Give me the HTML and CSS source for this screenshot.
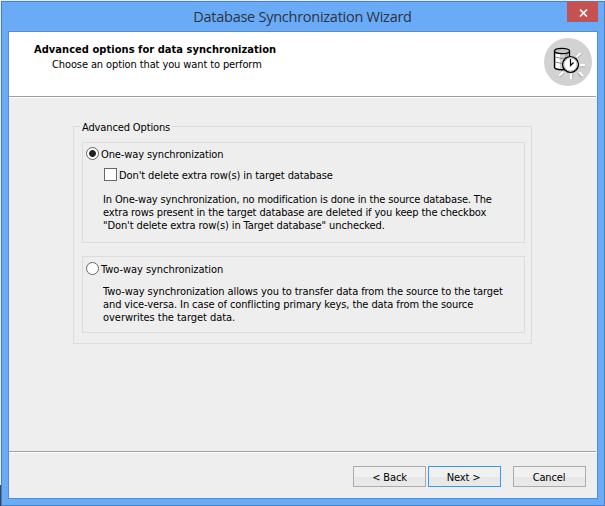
FILE: index.html
```html
<!DOCTYPE html>
<html lang="en">
<head>
<meta charset="utf-8">
<title>Database Synchronization Wizard</title>
<link rel="stylesheet" href="styles.css">
</head>
<body>
<div class="window">
  <div class="titlebar">
    <h1 class="title">Database Synchronization Wizard</h1>
    <button class="close" aria-label="Close"><svg width="9" height="8" viewBox="0 0 9 8"><path d="M1 .5 8 7.5M8 .5 1 7.5" stroke="#fff" stroke-width="1.7"/></svg></button>
  </div>
  <div class="client">
    <header class="header">
      <div class="heading">
        <h2><span class="t-heading">Advanced options for data synchronization</span></h2>
        <p><span class="t-sub">Choose an option that you want to perform</span></p>
      </div>
      <svg class="emblem" width="48" height="48" viewBox="0 0 48 48">
        <circle cx="24" cy="24" r="24" fill="#d2d2d2"/>
        <g stroke="#aaa" stroke-width="3.4"><path d="M32.5 19.5l4-4M36 27.5h5M34.5 34.5l4 4M27.5 36v5M19 34.5l-4 4"/></g>
        <g stroke="#fff" stroke-width="2.4"><path d="M32.5 19l4-4M36 27h5M35 34l4 4M27 36v5M19 34l-4 4"/></g>
        <path d="M10.5 13v16.5c1 3 14 3 15 0V13z" fill="#d0d0d0" stroke="#000" stroke-width="1.3"/>
        <path d="M12 15h4v15h-4z" fill="#fff"/>
        <path d="M21 15h4v15h-4z" fill="#aaa"/>
        <path d="M11 19q7 3 14 0M11 24q7 3 14 0" fill="none" stroke="#888"/>
        <ellipse cx="18" cy="13" rx="7.5" ry="2.7" fill="#c6c6c6" stroke="#000" stroke-width="1.2"/>
        <circle cx="26.5" cy="26.5" r="7.9" fill="#fff" stroke="#000" stroke-width="1.4"/>
        <circle cx="26.5" cy="26.5" r="6.5" fill="none" stroke="#bbb"/>
        <path d="M26.5 21V27.5l3-3" fill="none" stroke="#000" stroke-width="1.2"/>
      </svg>
    </header>
    <main class="content">
      <section class="group">
        <h3 class="legend"><span class="t-legend">Advanced Options</span></h3>
        <div class="option one-way">
          <label class="choice"><input type="radio" name="mode" checked><span class="t-one">One-way synchronization</span></label>
          <label class="choice sub"><input type="checkbox"><span class="t-check">Don't delete extra row(s) in target database</span></label>
          <p class="desc"><span class="a1">In One-way synchronization, no modification is done in the source database. The</span><br><span class="a2">extra rows present in the target database are deleted if you keep the checkbox</span><br><span class="a3">"Don't delete extra row(s) in Target database" unchecked.</span></p>
        </div>
        <div class="option two-way">
          <label class="choice"><input type="radio" name="mode"><span class="t-two">Two-way synchronization</span></label>
          <p class="desc"><span class="b1">Two-way synchronization allows you to transfer data from the source to the target</span><br><span class="b2">and vice-versa. In case of conflicting primary keys, the data from the source</span><br><span class="b3">overwrites the target data.</span></p>
        </div>
      </section>
    </main>
    <footer class="footer">
      <button class="btn">&lt; Back</button>
      <button class="btn next">Next &gt;</button>
      <button class="btn cancel">Cancel</button>
    </footer>
  </div>
</div>
</body>
</html>
```
FILE: styles.css
```css
* { box-sizing: border-box; }
body {
  margin: 0;
  width: 605px;
  height: 506px;
  padding: 1px 0 0 1px;
  overflow: hidden;
  background: linear-gradient(#ececec 485px, #39455f 485px);
  font: 11px/13px "DejaVu Sans Condensed", "DejaVu Sans", sans-serif;
  color: #000;
}
h1, h2, h3, p { margin: 0; font-size: inherit; font-weight: normal; }
.window {
  width: 604px;
  height: 505px;
  border: 1px solid #4a80bc;
  background: #6aabf7;
  padding: 0 6px;
}
.titlebar { position: relative; height: 29px; }
.title {
  text-align: center;
  font: 14.5px/29px "Open Sans", "Noto Sans", sans-serif;
  letter-spacing: -.26px;
  padding-right: 1px;
  color: #2b3440;
}
.close {
  position: absolute;
  right: 0;
  top: 0;
  width: 31px;
  height: 20px;
  border: 0;
  padding: 1px 0 0 1px;
  background: #c75050;
  display: flex;
  align-items: center;
  justify-content: center;
}
.client {
  height: 468px;
  border: 1px solid #528fd2;
  background: #eee;
  display: flex;
  flex-direction: column;
}
.header {
  height: 66px;
  flex: none;
  padding: 6px 5px 0 25px;
  display: flex;
  justify-content: space-between;
  background: linear-gradient(#a0a0a0, #a0a0a0) 0 64px / 587px 1px no-repeat #fff;
}
.heading { padding-top: 4px; white-space: nowrap; }
.heading h2 { font-weight: bold; line-height: 15px; }
.heading p { padding-left: 18px; line-height: 15px; }
.emblem { flex: none; }
.content { flex: 1; padding: 28px 65px 0 64px; }
.group {
  width: 459px;
  height: 218px;
  border: 1px solid #dcdcdc;
  padding: 0 6px 0 8px;
}
.legend {
  display: table;
  height: 15px;
  margin-top: -8px;
  margin-bottom: -2px;
  margin-left: -2px;
  padding: 0 2px;
  background: #eee;
  line-height: 17px;
}
.option { width: 443px; border: 1px solid #dcdcdc; white-space: nowrap; }
.one-way { height: 101px; margin-top: 8px; padding: 4px 3px; }
.two-way { height: 77px; margin-top: 13px; padding: 5px 3px; }
.choice { display: flex; align-items: center; height: 13px; gap: 2px; }
.choice span { padding-top: 2px; }
.choice.sub { margin: 8px 0 0 18px; }
.choice input {
  appearance: none;
  flex: none;
  width: 13px;
  height: 13px;
  margin: 0;
  border: 1px solid #666;
  background: #fff;
}
.choice input[type="radio"] { border-radius: 50%; }
.choice input[type="radio"]:checked { background: radial-gradient(circle, #222 3px, #fff 3.8px); }
.desc { margin-left: 17px; }
.one-way .desc { padding-top: 12px; }
.two-way .desc { padding-top: 10px; }
.t-heading { letter-spacing: .05px; }
.t-sub { letter-spacing: -.11px; }
.t-legend { letter-spacing: -.13px; }
.t-one { letter-spacing: -.11px; }
.t-two { letter-spacing: -.05px; }
.t-check { letter-spacing: -.1px; }
.a1 { letter-spacing: -.15px; }
.a2 { letter-spacing: -.13px; }
.a3 { letter-spacing: -.1px; }
.b1 { letter-spacing: -.085px; }
.b2 { letter-spacing: -.1px; }
.b3 { letter-spacing: -.04px; }
.footer {
  height: 48px;
  flex: none;
  padding: 16px 11px 0 0;
  display: flex;
  justify-content: flex-end;
  gap: 2px;
  background:
    linear-gradient(#a0a0a0, #a0a0a0) 0 1px / 587px 1px no-repeat,
    linear-gradient(#fff, #fff) 0 2px / 588px 1px no-repeat;
}
.btn {
  width: 73px;
  height: 21px;
  border: 1px solid #acacac;
  padding: 2px 0 0;
  background: linear-gradient(#f0f0f0 50%, #e7e7e7 50%, #e9e9e9);
  font: inherit;
  letter-spacing: -.15px;
  color: #000;
}
.btn.next { border-color: #3399ff; padding-right: 2px; }
.btn.cancel { margin-left: 10px; padding-right: 1px; }
```
